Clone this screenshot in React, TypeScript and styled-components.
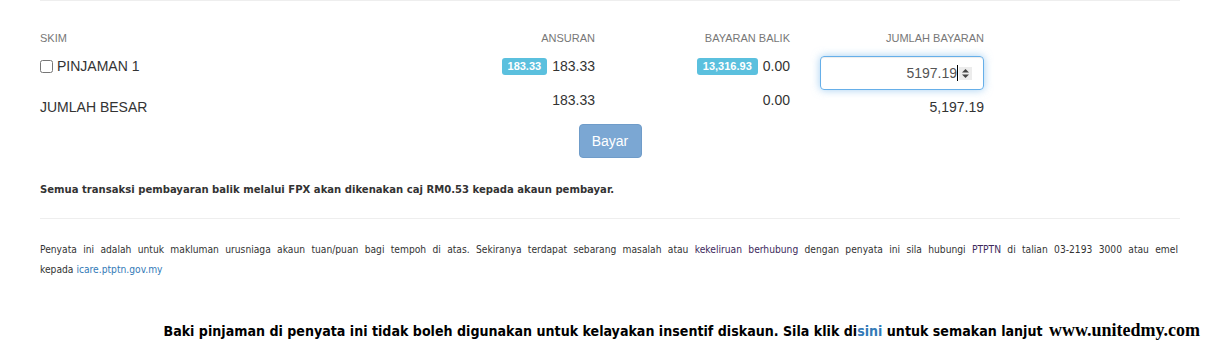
import React from 'react';
import styled, { createGlobalStyle } from 'styled-components';

const GlobalStyle = createGlobalStyle`
  html, body {
    margin: 0;
    padding: 0;
    background: #fff;
  }
  body {
    font-family: 'Liberation Sans', Arial, sans-serif;
    font-size: 14px;
    color: #333;
    width: 1206px;
    height: 344px;
    overflow: hidden;
  }
`;

const Page = styled.div`
  position: relative;
  width: 1206px;
  height: 344px;
`;

const Container = styled.div`
  margin-left: 40px;
  width: 1140px;
  border-top: 1px solid #eee;
`;

const Table = styled.div`
  display: grid;
  grid-template-columns: 1fr 195px 195px 194px 188px;
  padding-top: 27px;
`;

const HeadCell = styled.div<{ $right?: boolean }>`
  font-size: 11px;
  line-height: 20px;
  color: #777;
  text-align: ${(p) => (p.$right ? 'right' : 'left')};
  padding-right: ${(p) => (p.$right ? '8px' : '0')};
`;

const Cell = styled.div<{ $right?: boolean; $top?: number }>`
  display: flex;
  align-items: center;
  justify-content: ${(p) => (p.$right ? 'flex-end' : 'flex-start')};
  align-self: start;
  padding-top: ${(p) => p.$top ?? 8}px;
  padding-right: ${(p) => (p.$right ? '8px' : '0')};
  line-height: 20px;
  font-size: 14px;
  color: #333;
`;

const Check = styled.input`
  width: 13px;
  height: 13px;
  margin: 0 4px 0 0;
`;

const Badge = styled.span`
  display: inline-block;
  background: #5bc0de;
  color: #fff;
  font-weight: bold;
  font-size: 11px;
  line-height: 11px;
  padding: 3px 6px;
  border-radius: 3px;
  margin-right: 5px;
`;

const InputBox = styled.div`
  box-sizing: border-box;
  width: 164px;
  height: 34px;
  border: 1px solid #66afe9;
  border-radius: 4px;
  box-shadow: inset 0 1px 1px rgba(0, 0, 0, 0.075), 0 0 8px rgba(102, 175, 233, 0.6);
  display: flex;
  align-items: center;
  justify-content: flex-end;
  padding-right: 11px;
  font-size: 14px;
  color: #555;
`;

const Caret = styled.span`
  display: inline-block;
  width: 1px;
  height: 16px;
  background: #000;
`;

const Spinner = styled.span`
  display: inline-flex;
  width: 13px;
  height: 13px;
  background: #ececec;
  margin-left: 1px;
  align-items: center;
  justify-content: center;
`;

const ButtonRow = styled.div`
  display: flex;
  justify-content: center;
  padding-top: 7px;
`;

const Button = styled.button`
  width: 63px;
  height: 34px;
  border: 1px solid #6f9cc9;
  background: #7ba7d3;
  color: #fff;
  border-radius: 4px;
  font-family: 'Liberation Sans', Arial, sans-serif;
  font-size: 14px;
  cursor: not-allowed;
`;

const Notice = styled.p`
  margin: 24px 0 0;
  font-family: 'DejaVu Sans Condensed', 'DejaVu Sans', sans-serif;
  font-weight: bold;
  font-size: 11.2px;
  line-height: 16px;
  color: #333;
`;

const Rule = styled.hr`
  border: 0;
  border-top: 1px solid #eee;
  margin: 20px 0 0;
`;

const Statement = styled.p`
  margin: 21px 0 0;
  font-family: 'DejaVu Sans Condensed', 'DejaVu Sans', sans-serif;
  font-size: 10.2px;
  line-height: 20px;
  color: #333;
  text-align: justify;
  width: 1138px;
`;

const NoWrap = styled.span`
  white-space: nowrap;
`;

const Dim = styled.span`
  color: #3d2a5c;
`;

const Link = styled.a`
  color: #337ab7;
  text-decoration: none;
`;

const Footer = styled.p`
  margin: 42px 0 0;
  text-align: center;
  font-family: 'DejaVu Sans Condensed', 'DejaVu Sans', sans-serif;
  font-weight: bold;
  font-size: 14.1px;
  line-height: 18px;
  color: #000;
`;

const Watermark = styled.div`
  position: absolute;
  right: 6px;
  bottom: 3px;
  font-family: 'Liberation Serif', 'Times New Roman', serif;
  font-weight: bold;
  font-size: 18px;
  color: #000;
`;

export default function App() {
  return (
    <Page>
      <GlobalStyle />
      <Container>
        <Table>
          <HeadCell>SKIM</HeadCell>
          <HeadCell $right>ANSURAN</HeadCell>
          <HeadCell $right>BAYARAN BALIK</HeadCell>
          <HeadCell $right>JUMLAH BAYARAN</HeadCell>
          <HeadCell />

          <Cell>
            <Check type="checkbox" />
            PINJAMAN 1
          </Cell>
          <Cell $right>
            <Badge>183.33</Badge>183.33
          </Cell>
          <Cell $right>
            <Badge>13,316.93</Badge>0.00
          </Cell>
          <Cell $right>
            <InputBox>
              5197.19
              <Caret />
              <Spinner>
                <svg width="9" height="11" viewBox="0 0 9 11">
                  <path d="M4.5 1 L8 4.5 H1 Z" fill="#444" />
                  <path d="M4.5 10 L8 6.5 H1 Z" fill="#444" />
                </svg>
              </Spinner>
            </InputBox>
          </Cell>
          <Cell />

          <Cell $top={7}>JUMLAH BESAR</Cell>
          <Cell $right $top={0}>183.33</Cell>
          <Cell $right $top={0}>0.00</Cell>
          <Cell $right $top={7}>5,197.19</Cell>
          <Cell $top={7} />
        </Table>

        <ButtonRow>
          <Button type="button">Bayar</Button>
        </ButtonRow>

        <Notice>
          Semua transaksi pembayaran balik melalui FPX akan dikenakan caj RM0.53 kepada akaun pembayar.
        </Notice>

        <Rule />

        <Statement>
          Penyata ini adalah untuk makluman urusniaga akaun tuan/puan bagi tempoh di atas. Sekiranya terdapat
          sebarang masalah atau <Dim>kekeliruan berhubung</Dim> dengan penyata ini sila hubungi <Dim>PTPTN</Dim> di
          talian 03-2193 3000 atau emel{' '}
          <NoWrap>
            kepada <Link href="#">icare.ptptn.gov.my</Link>
          </NoWrap>
        </Statement>
      </Container>

      <Footer>
        Baki pinjaman di penyata ini tidak boleh digunakan untuk kelayakan insentif diskaun. Sila klik di
        <Link href="#">sini</Link> untuk semakan lanjut
      </Footer>
      <Watermark>www.unitedmy.com</Watermark>
    </Page>
  );
}
